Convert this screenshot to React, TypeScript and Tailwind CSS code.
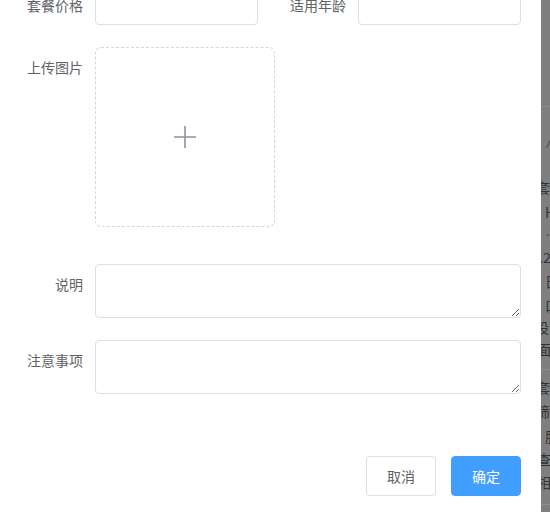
import React from "react";

const font = "font-['Noto_Sans_CJK_SC','Noto_Sans',sans-serif]";

const FieldLabel = ({ text, width = "w-[95px]" }: { text: string; width?: string }) => (
  <label className={`${width} shrink-0 pr-[12px] text-right text-[14px] leading-[40px] text-[#606266]`}>
    {text}
  </label>
);

const TextInput = () => (
  <div className="h-[40px] w-[163px] shrink-0 rounded-[4px] border border-[#dcdfe6] bg-white" />
);

const TextArea = () => (
  <textarea
    rows={2}
    className="block h-[54px] w-[426px] rounded-[4px] border border-[#dcdfe6] bg-white px-[15px] py-[5px] text-[14px] text-[#606266] outline-none"
  />
);

// what shows of the page behind the dimmed mask
const BehindStrip = () => (
  <div className="flex w-[9px] shrink-0 flex-col overflow-hidden bg-[#7f7f7f] text-[14px] leading-[18px] text-[#333]">
    <div className="h-[107px] shrink-0 border-b border-[#8c8c8c]" />
    <div className="mt-[28px] h-[18px] shrink-0 pl-[4px] text-[10px]">∧</div>
    <div className="mt-[25px] h-[18px] shrink-0 -ml-[5px] whitespace-nowrap">套</div>
    <div className="mt-[7px] h-[18px] shrink-0 pl-[4px]">H</div>
    <div className="mt-[9px] h-[18px] shrink-0 pl-[4px] text-[10px]">`</div>
    <div className="mt-[0px] h-[18px] shrink-0 -ml-[2px] whitespace-nowrap">.2</div>
    <div className="mt-[6px] h-[18px] shrink-0 pl-[4px] whitespace-nowrap">日</div>
    <div className="mt-[6px] h-[18px] shrink-0 pl-[4px] whitespace-nowrap">口</div>
    <div className="mt-[4px] h-[18px] shrink-0 -ml-[6px] whitespace-nowrap">设</div>
    <div className="mt-[4px] h-[18px] shrink-0 -ml-[4px] whitespace-nowrap">面</div>
    <div className="mt-[11px] h-0 shrink-0 border-t border-[#8c8c8c]" />
    <div className="mt-[8px] h-[18px] shrink-0 -ml-[5px] whitespace-nowrap">套</div>
    <div className="mt-[6px] h-[18px] shrink-0 -ml-[5px] whitespace-nowrap">筛</div>
    <div className="mt-[7px] h-[18px] shrink-0 pl-[4px] whitespace-nowrap">胆</div>
    <div className="mt-[5px] h-[18px] shrink-0 -ml-[4px] whitespace-nowrap">查</div>
    <div className="mt-[5px] h-[18px] shrink-0 -ml-[4px] whitespace-nowrap">相</div>
    <div className="mt-[13px] h-0 shrink-0 border-t border-[#8c8c8c]" />
  </div>
);

export default function App() {
  return (
    <div className={`flex h-[512px] w-[550px] overflow-hidden bg-white ${font}`}>
      <div className="w-[541px] shrink-0 bg-white">
        <div className="-mt-[15px] flex flex-col">
          {/* 价格 / 年龄 */}
          <div className="flex">
            <FieldLabel text="套餐价格" />
            <TextInput />
            <FieldLabel text="适用年龄" width="w-[100px]" />
            <TextInput />
          </div>

          {/* upload */}
          <div className="mt-[22px] flex">
            <FieldLabel text="上传图片" />
            <div className="flex h-[180px] w-[180px] items-center justify-center rounded-[6px] border border-dashed border-[#d3d6dc] bg-white">
              <svg width="24" height="24" viewBox="0 0 24 24">
                <path d="M12 1v22M1 12h22" stroke="#8c939d" strokeWidth="1.6" fill="none" />
              </svg>
            </div>
          </div>

          <div className="mt-[37px] flex">
            <FieldLabel text="说明" />
            <TextArea />
          </div>

          <div className="mt-[22px] flex">
            <FieldLabel text="注意事项" />
            <TextArea />
          </div>

          <div className="mt-[62px] flex justify-end gap-[15px] pr-[20px]">
            <button className="h-[40px] w-[70px] rounded-[4px] border border-[#dcdfe6] bg-white text-[14px] text-[#606266]">
              取消
            </button>
            <button className="h-[40px] w-[70px] rounded-[4px] border border-[#409eff] bg-[#409eff] text-[14px] text-white">
              确定
            </button>
          </div>
        </div>
      </div>
      <BehindStrip />
    </div>
  );
}
